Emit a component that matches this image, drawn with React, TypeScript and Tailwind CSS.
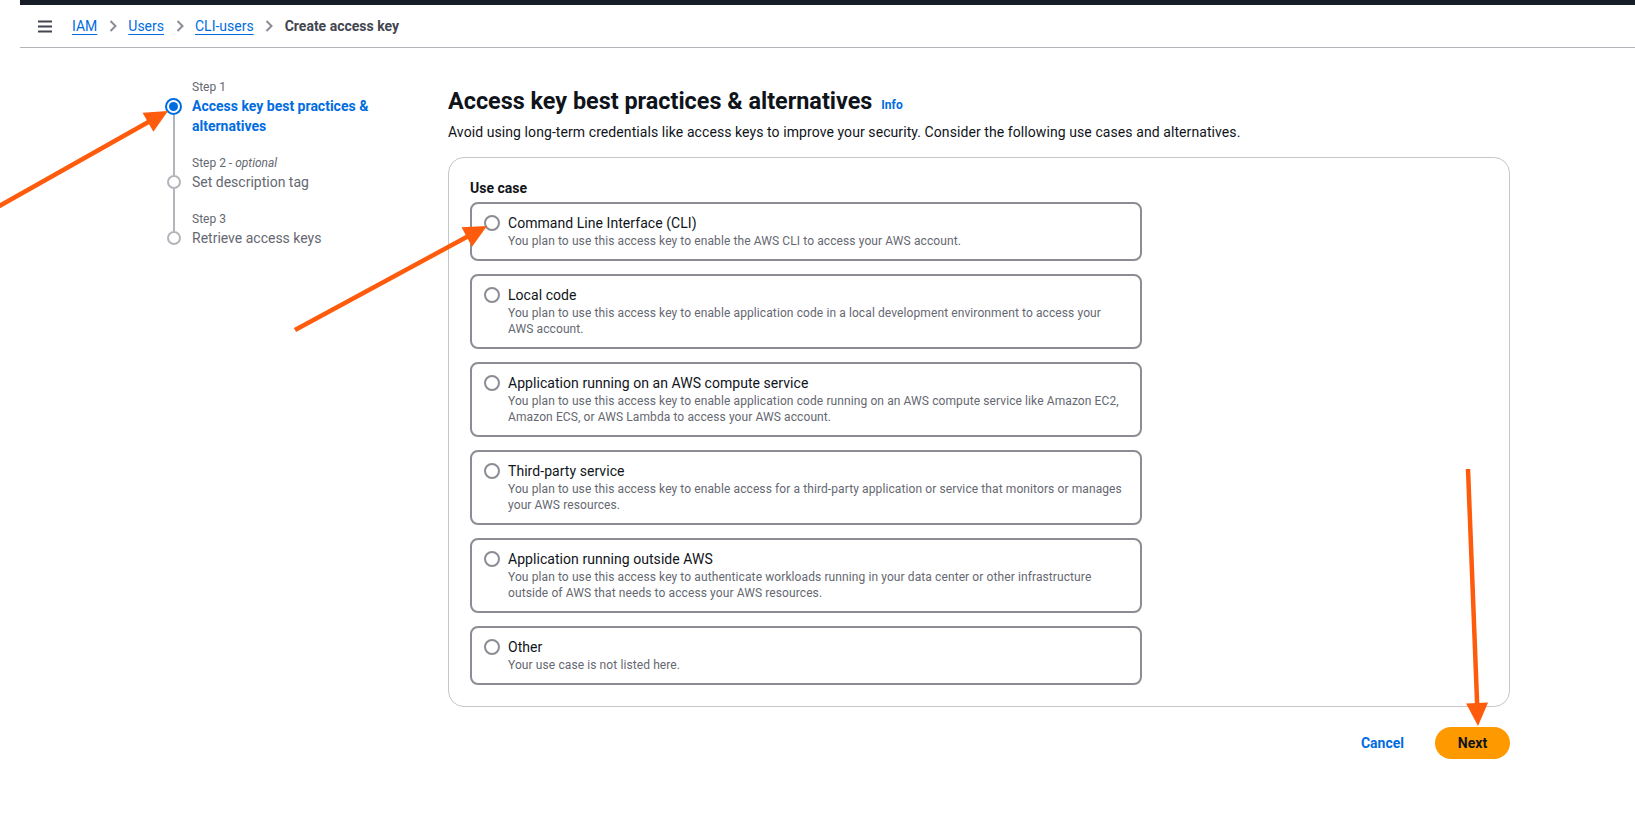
import React from "react";

type Opt = { title: string; lines: string[] };

const options: Opt[] = [
  {
    title: "Command Line Interface (CLI)",
    lines: ["You plan to use this access key to enable the AWS CLI to access your AWS account."],
  },
  {
    title: "Local code",
    lines: [
      "You plan to use this access key to enable application code in a local development environment to access your",
      "AWS account.",
    ],
  },
  {
    title: "Application running on an AWS compute service",
    lines: [
      "You plan to use this access key to enable application code running on an AWS compute service like Amazon EC2,",
      "Amazon ECS, or AWS Lambda to access your AWS account.",
    ],
  },
  {
    title: "Third-party service",
    lines: [
      "You plan to use this access key to enable access for a third-party application or service that monitors or manages",
      "your AWS resources.",
    ],
  },
  {
    title: "Application running outside AWS",
    lines: [
      "You plan to use this access key to authenticate workloads running in your data center or other infrastructure",
      "outside of AWS that needs to access your AWS resources.",
    ],
  },
  {
    title: "Other",
    lines: ["Your use case is not listed here."],
  },
];

function Chevron() {
  return (
    <svg width="10" height="12" viewBox="0 0 10 12" className="mx-[10.5px] shrink-0">
      <polyline points="2.5,1 7.5,6 2.5,11" fill="none" stroke="#8c8c94" strokeWidth="2" />
    </svg>
  );
}

function Arrow({ x1, y1, x2, y2 }: { x1: number; y1: number; x2: number; y2: number }) {
  const dx = x2 - x1;
  const dy = y2 - y1;
  const L = Math.hypot(dx, dy);
  const ux = dx / L;
  const uy = dy / L;
  const len = 23;
  const half = 11;
  const bx = x2 - ux * len;
  const by = y2 - uy * len;
  const px = -uy;
  const py = ux;
  const pts = `${x2},${y2} ${bx + px * half},${by + py * half} ${bx - px * half},${by - py * half}`;
  return (
    <g>
      <line x1={x1} y1={y1} x2={bx + ux * 2} y2={by + uy * 2} stroke="#fe5b0c" strokeWidth="4.5" />
      <polygon points={pts} fill="#fe5b0c" />
    </g>
  );
}

const steps = [
  { label: "Step 1", optional: false, title: ["Access key best practices &", "alternatives"], active: true },
  { label: "Step 2", optional: true, title: ["Set description tag"], active: false },
  { label: "Step 3", optional: false, title: ["Retrieve access keys"], active: false },
];

export default function App() {
  return (
    <div className="relative min-h-[814px] w-full overflow-hidden bg-white font-['Roboto','Liberation_Sans',sans-serif] text-[#0f141a]">
      {/* Top header */}
      <div className="ml-[20px]">
        <div className="h-[5px] bg-[#161d26]" />
        <div className="flex h-[43px] items-center border-b border-[#b4b4bb] pl-[18px]">
          <svg width="14" height="13" viewBox="0 0 14 13" className="shrink-0">
            <rect x="0" y="0.5" width="14" height="2" fill="#424650" />
            <rect x="0" y="5.5" width="14" height="2" fill="#424650" />
            <rect x="0" y="10.5" width="14" height="2" fill="#424650" />
          </svg>
          <nav className="ml-[20px] flex items-center text-[14px] leading-[20px]">
            <a className="text-[#006ce0] underline underline-offset-[3px]">IAM</a>
            <Chevron />
            <a className="text-[#006ce0] underline underline-offset-[3px]">Users</a>
            <Chevron />
            <a className="text-[#006ce0] underline underline-offset-[3px]">CLI-users</a>
            <Chevron />
            <span className="font-bold text-[#424650]">Create access key</span>
          </nav>
        </div>
      </div>

      {/* Main */}
      <div className="flex pl-[165px] pt-[31px]">
        {/* Wizard nav */}
        <div className="flex w-[247px] shrink-0 flex-col">
          {steps.map((s, i) => {
            const first = i === 0;
            const last = i === steps.length - 1;
            return (
              <div key={s.label} className="flex gap-[10px]">
                <div className="flex w-[17px] shrink-0 flex-col items-center">
                  <div className={`h-[17px] w-[2px] ${first ? "" : "bg-[#b4b4bb]"}`} />
                  <div className="flex h-[20px] flex-col items-center">
                    <div className={`w-[2px] flex-1 ${first ? "" : "bg-[#b4b4bb]"}`} />
                    {s.active ? (
                      <div className="flex h-[17px] w-[17px] items-center justify-center rounded-full border-2 border-[#006ce0]">
                        <div className="h-[9px] w-[9px] rounded-full bg-[#006ce0]" />
                      </div>
                    ) : (
                      <div className="h-[14px] w-[14px] rounded-full border-2 border-[#b4b4bb]" />
                    )}
                    <div className={`w-[2px] flex-1 ${last ? "" : "bg-[#b4b4bb]"}`} />
                  </div>
                  <div className={`w-[2px] flex-1 ${last ? "" : "bg-[#b4b4bb]"}`} />
                </div>
                <div className={`flex flex-col ${last ? "" : "pb-[19px]"}`}>
                  <div className="text-[12px] leading-[17px] text-[#656871]">
                    {s.label}
                    {s.optional && (
                      <>
                        {" - "}
                        <i>optional</i>
                      </>
                    )}
                  </div>
                  {s.title.map((t) => (
                    <div
                      key={t}
                      className={`text-[14px] leading-[20px] ${s.active ? "font-bold text-[#006ce0]" : "text-[#656871]"}`}
                    >
                      {t}
                    </div>
                  ))}
                </div>
              </div>
            );
          })}
        </div>

        {/* Content */}
        <div className="ml-[36px] mt-[7px] flex w-[1062px] shrink-0 flex-col">
          <div className="flex items-baseline">
            <h1 className="text-[23.4px] font-bold leading-[30px] text-[#0f141a]">
              Access key best practices &amp; alternatives
            </h1>
            <a className="ml-[9px] text-[12px] font-bold text-[#006ce0]">Info</a>
          </div>
          <p className="mt-[6px] text-[14px] leading-[20px] tracking-[0.08px] text-[#0f141a]">
            Avoid using long-term credentials like access keys to improve your security. Consider the following use cases and
            alternatives.
          </p>

          <div className="mt-[15px] rounded-[16px] border border-[#c6c6cd] px-[21px] pb-[21px] pt-[20px]">
            <div className="text-[14px] font-bold leading-[20px] text-[#0f141a]">Use case</div>
            <div className="mt-[4px] flex w-[672px] flex-col gap-[13px]">
              {options.map((o) => (
                <div
                  key={o.title}
                  className="flex gap-[8px] rounded-[8px] border-2 border-[#8c8c94] pb-[10px] pl-[12px] pr-[12px] pt-[9px]"
                >
                  <div className="flex h-[20px] shrink-0 items-center">
                    <div className="h-[16px] w-[16px] rounded-full border-2 border-[#8c8c94]" />
                  </div>
                  <div className="flex flex-col">
                    <div className="text-[14px] leading-[20px] tracking-[0.05px] text-[#0f141a]">{o.title}</div>
                    {o.lines.map((l) => (
                      <div
                        key={l}
                        className="whitespace-nowrap text-[12px] leading-[16px] tracking-[0.1px] text-[#656871]"
                      >
                        {l}
                      </div>
                    ))}
                  </div>
                </div>
              ))}
            </div>
          </div>

          <div className="mt-[20px] flex items-center justify-end gap-[31px]">
            <button className="text-[14px] font-bold text-[#006ce0]">Cancel</button>
            <button className="h-[32px] w-[75px] rounded-full bg-[#ff9900] text-[14px] font-bold text-[#0f141a]">
              Next
            </button>
          </div>
        </div>
      </div>

      {/* Annotation arrows */}
      <svg className="pointer-events-none absolute left-0 top-0" width="1635" height="814" viewBox="0 0 1635 814">
        <Arrow x1={-6} y1={209} x2={168} y2={111} />
        <Arrow x1={295} y1={330} x2={487} y2={226} />
        <Arrow x1={1468} y1={469} x2={1478} y2={726} />
      </svg>
    </div>
  );
}
